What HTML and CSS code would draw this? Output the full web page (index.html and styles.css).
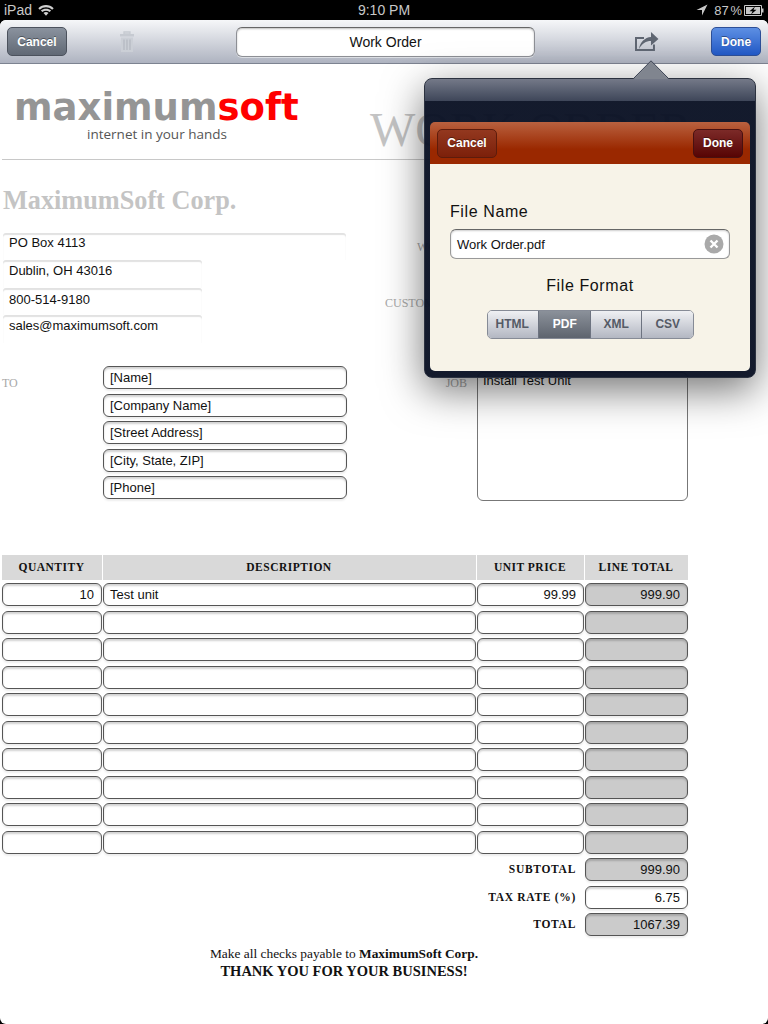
FILE: index.html
```html
<!DOCTYPE html>
<html lang="en">
<head>
<meta charset="utf-8">
<title>Work Order</title>
<link rel="stylesheet" href="styles.css">
</head>
<body>
<div class="app">
  <header class="status">
    <div class="status-left">
      <span>iPad</span>
      <svg class="wifi" viewBox="0 0 16 12" width="16" height="12"><path d="M0.300 4.200C4.500 0 11.500 0 15.700 4.200L14.200 5.800C10.800 2.500 5.200 2.500 1.800 5.800Z" fill="#d0d0d0"/><path d="M2.900 6.600C5.800 4 10.200 4 13.100 6.600L11.600 8.100C9.500 6.300 6.500 6.300 4.400 8.100Z" fill="#d0d0d0"/><path d="M5.500 9C7 7.800 9 7.800 10.500 9L8 11.700Z" fill="#d0d0d0"/></svg>
    </div>
    <div class="status-time">9:10 PM</div>
    <div class="status-right">
      <svg viewBox="0 0 12 12" width="12" height="12"><path d="M11.500 0.500L0.500 6H6V11.500Z" fill="#c8c8c8"/></svg>
      <span class="battery-pct">87 %</span>
      <svg class="battery" viewBox="0 0 20 11" width="20" height="11"><path d="M0.500 0.500H17.500V10.500H0.500Z" fill="none" stroke="#c8c8c8"/><path d="M2 2H16V9H2Z" fill="#c8c8c8"/><path d="M18 3.500H19.500V7.500H18Z" fill="#c8c8c8"/><path d="M11 1.500L5.500 6.200H8.500L7 9.500L12.500 4.800H9.500Z" fill="#000"/></svg>
    </div>
  </header>

  <div class="page">
    <nav class="toolbar">
      <button class="btn btn-gray">Cancel</button>
      <svg class="trash" viewBox="0 0 16 21" width="16" height="21"><path d="M5 3V1H11V3Z" fill="none" stroke="#c6cad1" stroke-width="1.300"/><path d="M1 3H15V5.500H1Z" fill="#c6cad1"/><path d="M2 6.500H14V21H2Z" fill="#cbcfd6"/><path d="M5 8.500V19M8 8.500V19M11 8.500V19" stroke="#b3b7c0" stroke-width="1.200"/></svg>
      <div class="title-field">Work Order</div>
      <svg class="share" viewBox="0 0 24 19" width="24" height="19"><path d="M9 6H1V18H19V12.500" fill="none" stroke="#5f6672" stroke-width="2"/><path d="M4 17C5 10 10 5.500 16 5V0L23.500 7L16 13.500V9C11 9 7 11.500 4 17Z" fill="#5f6672"/></svg>
      <button class="btn btn-blue">Done</button>
    </nav>

    <main class="sheet">
      <section class="letterhead">
        <div class="logo">
          <div class="logo-name">maximum<span class="logo-soft">soft</span></div>
          <div class="logo-tag">internet in your hands</div>
        </div>
        <div class="doc-title">WORK ORDER</div>
      </section>

      <section class="parties">
        <div class="seller">
          <h1 class="company">MaximumSoft Corp.</h1>
          <div class="addr addr-one">PO Box 4113</div>
          <div class="addr addr-two">Dublin, OH 43016</div>
          <div class="addr addr-three">800-514-9180</div>
          <div class="addr addr-four">sales@maximumsoft.com</div>
        </div>
        <div class="refs">
          <div class="ref ref-first">WORK ID</div>
          <div class="ref ref-second">CUSTOMER ID</div>
        </div>
      </section>

      <section class="bill">
        <div class="side-label to-label">TO</div>
        <div class="to-fields">
          <div class="field">[Name]</div>
          <div class="field">[Company Name]</div>
          <div class="field">[Street Address]</div>
          <div class="field">[City, State, ZIP]</div>
          <div class="field">[Phone]</div>
        </div>
        <div class="side-label job-label">JOB</div>
        <div class="job-box">Install Test Unit</div>
      </section>

      <section class="lines">
        <div class="th">QUANTITY</div><div class="th">DESCRIPTION</div><div class="th">UNIT PRICE</div><div class="th">LINE TOTAL</div>
        <div class="field num">10</div><div class="field">Test unit</div><div class="field num">99.99</div><div class="field num calc">999.90</div>
        <div class="field"></div><div class="field"></div><div class="field"></div><div class="field calc"></div>
        <div class="field"></div><div class="field"></div><div class="field"></div><div class="field calc"></div>
        <div class="field"></div><div class="field"></div><div class="field"></div><div class="field calc"></div>
        <div class="field"></div><div class="field"></div><div class="field"></div><div class="field calc"></div>
        <div class="field"></div><div class="field"></div><div class="field"></div><div class="field calc"></div>
        <div class="field"></div><div class="field"></div><div class="field"></div><div class="field calc"></div>
        <div class="field"></div><div class="field"></div><div class="field"></div><div class="field calc"></div>
        <div class="field"></div><div class="field"></div><div class="field"></div><div class="field calc"></div>
        <div class="field"></div><div class="field"></div><div class="field"></div><div class="field calc"></div>
      </section>

      <section class="totals">
        <div class="total-label">SUBTOTAL</div><div class="field num calc">999.90</div>
        <div class="total-label">TAX RATE (%)</div><div class="field num">6.75</div>
        <div class="total-label">TOTAL</div><div class="field num calc">1067.39</div>
      </section>

      <footer class="closing">
        <div class="closing-pay">Make all checks payable to <b>MaximumSoft Corp.</b></div>
        <div class="closing-thanks">THANK YOU FOR YOUR BUSINESS!</div>
      </footer>
    </main>
  </div>

  <aside class="popover">
    <svg class="pop-arrow" viewBox="0 0 36 19" width="36" height="19"><path d="M0.500 19L18 1L35.500 19Z" fill="#80858f"/><path d="M0.500 18.500L18 0.800L35.500 18.500" fill="none" stroke="#3c4354"/></svg>
    <div class="panel">
      <div class="panel-nav">
        <button class="btn btn-rust">Cancel</button>
        <button class="btn btn-wine">Done</button>
      </div>
      <div class="panel-body">
        <div class="panel-label">File Name</div>
        <div class="file-input">
          <span>Work Order.pdf</span>
          <svg viewBox="0 0 20 20" width="20" height="20"><circle cx="10" cy="10" r="9.500" fill="#a9a9a9"/><path d="M6.500 6.500L13.500 13.500M13.500 6.500L6.500 13.500" stroke="#fff" stroke-width="2.400"/></svg>
        </div>
        <div class="panel-label panel-center">File Format</div>
        <div class="segments">
          <div class="seg">HTML</div>
          <div class="seg seg-on">PDF</div>
          <div class="seg">XML</div>
          <div class="seg">CSV</div>
        </div>
      </div>
    </div>
  </aside>
</div>
</body>
</html>
```
FILE: styles.css
```css
* { box-sizing: border-box; }
html, body { margin: 0; padding: 0; background: #000; }
body { font-family: "Liberation Sans", Arial, sans-serif; }
.app { position: relative; width: 768px; height: 1024px; overflow: hidden; background: #000; }

.status { display: flex; align-items: center; justify-content: space-between; height: 20px; padding: 0 4px; color: #c8c8c8; font-size: 14px; }
.status-left, .status-right { display: flex; align-items: center; gap: 6px; width: 150px; }
.status-right { justify-content: flex-end; }
.status-time { font-size: 14px; }
.battery-pct { font-size: 13px; word-spacing: -2px; }
.battery { margin-left: -4px; }

.page { height: 1004px; background: #fff; border-radius: 6px; overflow: hidden; }
.toolbar { display: flex; align-items: center; height: 44px; padding: 0 7px; background: linear-gradient(#f6f7f9, #aeb3c0); border-bottom: 1px solid #7d8391; }
.btn { height: 29px; padding: 0; font: bold 12px "Liberation Sans", Arial, sans-serif; color: #fff; border-radius: 5px; border: 1px solid #444; text-shadow: 0 -1px 0 rgba(0,0,0,.4); }
.btn-gray { width: 60px; background: linear-gradient(#8a929e, #616975); border-color: #4c525d; }
.btn-blue { width: 50px; margin-left: 52px; background: linear-gradient(#5d8fe3, #2259c6); border-color: #2d4f97; }
.trash { margin-left: 52px; }
.title-field { width: 300px; height: 30px; margin-left: 101px; background: #fff; border: 1px solid #8d8f95; border-top-color: #666; border-radius: 6px; font-size: 14px; line-height: 28px; text-align: center; color: #111; box-shadow: 0 1px 0 rgba(255,255,255,.5), inset 0 1px 2px rgba(0,0,0,.25); }
.share { margin-left: 100px; }

.sheet { width: 688px; padding-left: 2px; }
.letterhead { display: flex; height: 96px; border-bottom: 1px solid #c8c8c8; }
.logo { flex: none; width: 368px; padding: 25px 0 0 12px; }
.logo-name { font: bold 37px/38px "DejaVu Sans", sans-serif; color: #959595; white-space: nowrap; }
.logo-soft { color: #f00; }
.logo-tag { margin-left: 73px; font: 13.500px/14px "Open Sans", sans-serif; color: #555; white-space: nowrap; }
.doc-title { padding-top: 40px; font: 48px/52px "Liberation Serif", serif; color: #c4c4c4; white-space: nowrap; }

.parties { display: flex; height: 206px; }
.seller { flex: none; width: 383px; }
.company { margin: 0; height: 73px; padding: 26px 0 0 1px; font: bold 26.250px/30px "Liberation Serif", serif; color: #c4c4c4; }
.addr { width: 199px; margin-left: 1px; padding-left: 6px; font-size: 13px; line-height: 15px; color: #111; box-shadow: inset 0 2px 1px #e2e2e2; border-radius: 3px 3px 0 0; }
.addr-one { width: 343px; height: 27px; padding-top: 2px; }
.addr-two { height: 28px; padding-top: 3px; }
.addr-three { height: 27px; padding-top: 4px; }
.addr-four { height: 28px; padding-top: 3px; }
.refs { padding-top: 80px; }
.ref { font: 12px/14px "Liberation Serif", serif; color: #a8a8a8; white-space: nowrap; }
.ref-first { padding-left: 32px; }
.ref-second { margin-top: 42px; }

.bill { display: flex; align-items: flex-start; height: 189px; }
.side-label { font: 12px/14px "Liberation Serif", serif; color: #a8a8a8; }
.to-label { width: 101px; margin-top: 10px; }
.to-fields { display: grid; grid-auto-rows: 23px; row-gap: 4.500px; width: 244px; }
.job-label { width: 130px; margin-top: 10px; text-align: right; padding-right: 10px; }
.job-box { width: 211px; height: 129px; margin-top: 6px; padding: 0 5px; border: 1px solid #777; border-radius: 6px; font-size: 13px; line-height: 16px; color: #111; }

.field { height: 23px; padding: 0 7px 0 6px; border: 1px solid #555; border-radius: 6px; background: #fff; font-size: 13px; line-height: 22px; color: #111; box-shadow: inset 0 2px 2px rgba(0,0,0,.18), 0 2px 2px #eee; overflow: hidden; }
.num { text-align: right; }
.calc { background: #cbcbcb; }

.lines { display: grid; grid-template-columns: 100px 373px 107px 103px; grid-template-rows: 28px; grid-auto-rows: 27.500px; column-gap: 1px; }
.th { height: 25px; padding-right: 1px; background: #d9d9d9; font: bold 11.500px/24px "Liberation Serif", serif; text-align: center; letter-spacing: .5px; color: #111; }

.totals { display: grid; grid-template-columns: 583px 103px; grid-auto-rows: 27.500px; }
.total-label { padding-right: 9px; font: bold 11.500px/22px "Liberation Serif", serif; text-align: right; letter-spacing: .7px; color: #111; }

.closing { margin-top: 4px; padding-right: 2px; text-align: center; font-family: "Liberation Serif", serif; color: #111; }
.closing-pay { font-size: 13.400px; line-height: 17px; }
.closing-thanks { font-size: 14.500px; font-weight: bold; line-height: 18px; }

.popover { position: absolute; left: 424px; top: 78px; width: 332px; height: 300px; padding: 43px 6px 6px; border: 1px solid #2c3240; border-radius: 8px; background: linear-gradient(#747988, #3e4659 22px, rgba(10,17,36,.96) 22px); box-shadow: 0 12px 40px rgba(0,0,0,.55); }
.pop-arrow { position: absolute; left: 208px; top: -19px; }
.panel { display: flex; flex-direction: column; height: 100%; margin: 0 -1px -1px; border-radius: 5px; overflow: hidden; }
.panel-nav { display: flex; flex: none; justify-content: space-between; align-items: center; height: 42px; padding: 0 7px; background: linear-gradient(#b9613f, #9a2800 65%); }
.btn-rust { width: 60px; background: linear-gradient(#93381f, #7c200a); border-color: #5d1c0c; }
.btn-wine { width: 50px; background: linear-gradient(#7c2a28, #570404); border-color: #481010; }
.panel-body { flex: 1; padding: 39px 20px 0; background: #f7f3e8; }
.panel-label { font-size: 16px; line-height: 18px; letter-spacing: .6px; color: #111; }
.panel-center { margin-top: 18px; text-align: center; }
.file-input { display: flex; align-items: center; justify-content: space-between; height: 30px; margin-top: 8px; padding: 0 5px 0 6px; background: #fff; border: 1px solid #999; border-top-color: #666; border-radius: 6px; font-size: 13px; color: #111; box-shadow: inset 0 1px 2px rgba(0,0,0,.2); }
.segments { display: flex; width: 207px; height: 29px; margin: 15px auto 0; border: 1px solid #868b96; border-radius: 5px; overflow: hidden; }
.seg { width: 52px; padding-left: 1px; border-left: 1px solid #6d7380; background: linear-gradient(#eff0f3, #b3b7c2); font-size: 12px; font-weight: bold; line-height: 27px; text-align: center; color: #555b66; }
.seg:first-child { width: 51px; padding: 0 1px 0 0; border-left: 0; }
.seg-on { background: linear-gradient(#8b919a, #5e646e); color: #fff; }
```
